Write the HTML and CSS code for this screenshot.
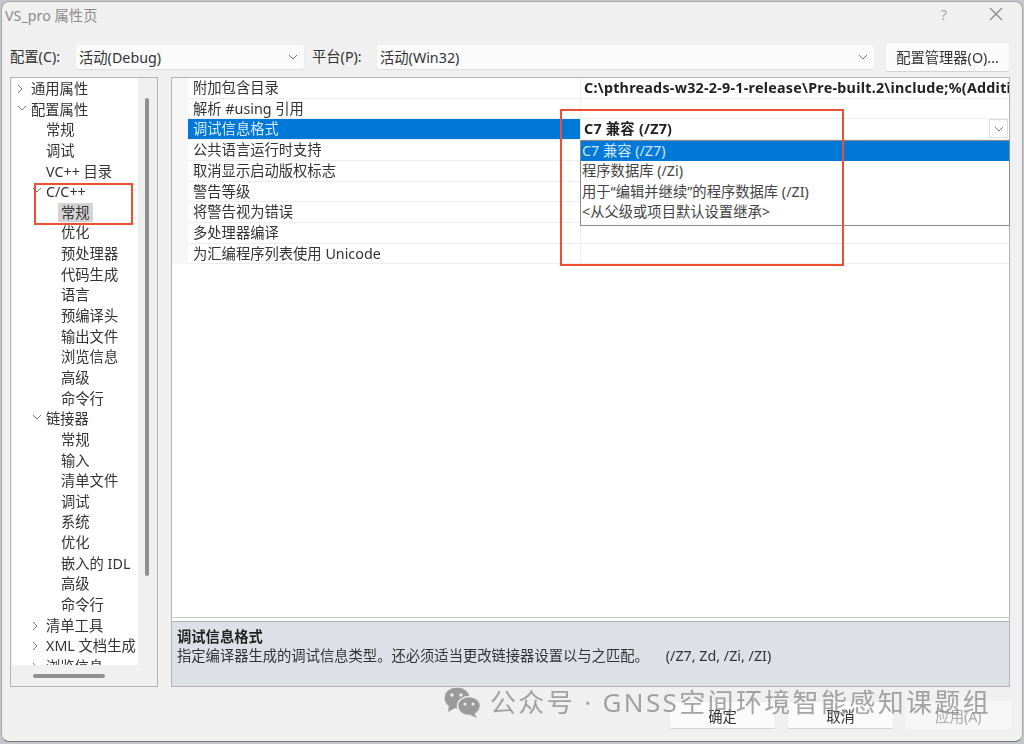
FILE: index.html
```html
<!DOCTYPE html>
<html lang="zh-CN">

<head>
    <meta charset="UTF-8">
    <title>VS_pro 属性页</title>
    <link rel="stylesheet" href="styles.css">
</head>

<body>
    <div class="window">
        <div class="titlebar">
            <span class="title">VS_pro 属性页</span>
            <span class="help">?</span>
            <svg class="close" width="14" height="14" viewBox="0 0 14 14"><path d="M1 1l12 12M13 1L1 13" /></svg>
        </div>

        <div class="config-row">
            <label class="config-label">配置(C):</label>
            <div class="combo combo-config">
                <span>活动(Debug)</span>
                <svg class="chev" width="10" height="6" viewBox="0 0 10 6"><path d="M1 1l4 4 4-4" /></svg>
            </div>
            <label class="platform-label">平台(P):</label>
            <div class="combo combo-platform">
                <span>活动(Win32)</span>
                <svg class="chev" width="10" height="6" viewBox="0 0 10 6"><path d="M1 1l4 4 4-4" /></svg>
            </div>
            <button class="btn btn-manager">配置管理器(O)...</button>
        </div>

        <div class="panels">
            <div class="tree-panel">
                <div class="tree-top">
                    <ul class="tree">
                        <li class="lv0"><svg class="arrow" width="6" height="10" viewBox="0 0 6 10"><path d="M1 1l4 4-4 4" /></svg>通用属性</li>
                        <li class="lv0"><svg class="arrow" width="10" height="6" viewBox="0 0 10 6"><path d="M1 1l4 4 4-4" /></svg>配置属性</li>
                        <li class="lv1">常规</li>
                        <li class="lv1">调试</li>
                        <li class="lv1">VC++ 目录</li>
                        <li class="lv1 has-arrow"><svg class="arrow" width="10" height="6" viewBox="0 0 10 6"><path d="M1 1l4 4 4-4" /></svg>C/C++</li>
                        <li class="lv2"><span class="current">常规</span></li>
                        <li class="lv2">优化</li>
                        <li class="lv2">预处理器</li>
                        <li class="lv2">代码生成</li>
                        <li class="lv2">语言</li>
                        <li class="lv2">预编译头</li>
                        <li class="lv2">输出文件</li>
                        <li class="lv2">浏览信息</li>
                        <li class="lv2">高级</li>
                        <li class="lv2">命令行</li>
                        <li class="lv1 has-arrow"><svg class="arrow" width="10" height="6" viewBox="0 0 10 6"><path d="M1 1l4 4 4-4" /></svg>链接器</li>
                        <li class="lv2">常规</li>
                        <li class="lv2">输入</li>
                        <li class="lv2">清单文件</li>
                        <li class="lv2">调试</li>
                        <li class="lv2">系统</li>
                        <li class="lv2">优化</li>
                        <li class="lv2">嵌入的 IDL</li>
                        <li class="lv2">高级</li>
                        <li class="lv2">命令行</li>
                        <li class="lv1 has-arrow"><svg class="arrow" width="6" height="10" viewBox="0 0 6 10"><path d="M1 1l4 4-4 4" /></svg>清单工具</li>
                        <li class="lv1 has-arrow"><svg class="arrow" width="6" height="10" viewBox="0 0 6 10"><path d="M1 1l4 4-4 4" /></svg>XML 文档生成</li>
                        <li class="lv1 has-arrow"><svg class="arrow" width="6" height="10" viewBox="0 0 6 10"><path d="M1 1l4 4-4 4" /></svg>浏览信息</li>
                    </ul>
                    <div class="vscroll"><div class="vthumb"></div></div>
                </div>
                <div class="hscroll"><div class="hthumb"></div></div>
            </div>

            <div class="grid-panel">
                <div class="grid">
                    <div class="row"><div class="name">附加包含目录</div><div class="value bold">C:\pthreads-w32-2-9-1-release\Pre-built.2\include;%(AdditionalIncludeDirectories)</div></div>
                    <div class="row"><div class="name">解析 #using 引用</div><div class="value"></div></div>
                    <div class="row"><div class="name selected">调试信息格式</div><div class="value bold">C7 兼容 (/Z7)<span class="drop-btn"><svg width="10" height="6" viewBox="0 0 10 6"><path d="M1 1l4 4 4-4" /></svg></span></div></div>
                    <div class="row"><div class="name">公共语言运行时支持</div><div class="value"></div></div>
                    <div class="row"><div class="name">取消显示启动版权标志</div><div class="value"></div></div>
                    <div class="row"><div class="name">警告等级</div><div class="value"></div></div>
                    <div class="row"><div class="name">将警告视为错误</div><div class="value"></div></div>
                    <div class="row"><div class="name">多处理器编译</div><div class="value"></div></div>
                    <div class="row"><div class="name">为汇编程序列表使用 Unicode</div><div class="value"></div></div>
                </div>
                <div class="desc">
                    <div class="desc-title">调试信息格式</div>
                    <div class="desc-text">指定编译器生成的调试信息类型。还必须适当更改链接器设置以与之匹配。<span class="desc-flags">(/Z7, Zd, /Zi, /ZI)</span></div>
                </div>
            </div>
        </div>

        <div class="footer">
            <button class="btn btn-foot">确定</button>
            <button class="btn btn-foot">取消</button>
            <button class="btn btn-foot btn-off">应用(A)</button>
        </div>
    </div>

    <!-- overlays -->
    <ul class="dropdown">
        <li class="active">C7 兼容 (/Z7)</li>
        <li>程序数据库 (/Zi)</li>
        <li>用于“编辑并继续”的程序数据库 (/ZI)</li>
        <li>&lt;从父级或项目默认设置继承&gt;</li>
    </ul>
    <div class="mark mark-tree"></div>
    <div class="mark mark-grid"></div>
    <div class="watermark">
        <svg width="38" height="32" viewBox="0 0 38 32">
            <ellipse cx="14" cy="12" rx="13" ry="11" />
            <path d="M6 19l-1 7 7-4z" />
            <ellipse cx="26" cy="20" rx="11.5" ry="9.5" stroke="#eee" stroke-width="1.5" />
            <path d="M31 27l3 5-7-3z" />
            <circle class="eye" cx="9" cy="9" r="1.7" />
            <circle class="eye" cx="18" cy="9" r="1.7" />
            <circle class="eye" cx="22" cy="18" r="1.5" />
            <circle class="eye" cx="30" cy="18" r="1.5" />
        </svg>
        <span>公众号 · GNSS空间环境智能感知课题组</span>
    </div>
</body>

</html>
```

FILE: styles.css
```css
* {
    box-sizing: border-box;
}

body {
    margin: 0;
    width: 1024px;
    height: 744px;
    overflow: hidden;
    position: relative;
    background: #c4c6cc;
    font-family: "Noto Sans", "Noto Sans CJK SC", sans-serif;
    font-size: 14.3px;
    color: #333;
    filter: blur(0.4px);
}

svg path {
    fill: none;
    stroke: #777;
    stroke-width: 1;
}

.window {
    margin: 1px 1px 0 1px;
    height: 741px;
    background: #f0f0f0;
    border: 1px solid #a8a8a8;
    border-bottom-color: #777;
    border-radius: 8px;
    padding: 0 12px 0 8px;
    display: flex;
    flex-direction: column;
}

.titlebar {
    height: 39px;
    display: flex;
    align-items: center;
    margin-left: -5px;
    padding-bottom: 15px;
    flex: none;
}

.title {
    flex: 1;
    color: #8c8c8c;
}

.help {
    color: #aaa;
    margin-right: 42px;
}

.close {
    margin-right: 7px;
}

.close path {
    stroke: #8a8a8a;
    stroke-width: 1.3;
}

.config-row {
    height: 31px;
    display: flex;
    align-items: center;
    flex: none;
}

.config-label {
    width: 66px;
    padding-bottom: 3px;
}

.platform-label {
    width: 65px;
    margin-left: 8px;
    padding-bottom: 3px;
}

.combo {
    height: 24px;
    background: #fbfbfb;
    border-radius: 3px;
    display: flex;
    align-items: center;
    justify-content: space-between;
    padding: 0 6px 0 3px;
    box-shadow: 0 1px 1px #ddd;
}

.combo span {
    padding-bottom: 1px;
}

.combo-config {
    width: 228px;
}

.combo-platform {
    width: 497px;
}

.btn {
    font-family: inherit;
    font-size: 14.3px;
    color: #333;
    background: #fbfbfb;
    border: 1px solid #ececec;
    border-bottom-color: #d4d4d4;
    border-radius: 3px;
    padding: 0;
}

.btn-manager {
    width: 125px;
    height: 30px;
    margin-left: 11px;
}

.panels {
    height: 610px;
    margin-top: 5px;
    display: flex;
    flex: none;
}

.tree-panel {
    width: 148px;
    border: 1px solid #b4b4b4;
    display: flex;
    flex-direction: column;
    flex: none;
}

.tree-top {
    display: flex;
    height: 587px;
}

.tree {
    list-style: none;
    margin: 0;
    padding: 0;
    width: 126px;
    height: 587px;
    background: #fff;
    overflow: hidden;
    margin-left: 1px;
}

.tree li {
    height: 20.65px;
    line-height: 21px;
    white-space: nowrap;
    position: relative;
    overflow: hidden;
}

.tree .lv0 {
    padding-left: 19px;
}

.tree .lv1 {
    padding-left: 34px;
}

.tree .lv2 {
    padding-left: 49px;
}

.arrow {
    position: absolute;
    left: 5px;
    top: 6px;
}

.has-arrow .arrow {
    left: 20px;
}

.current {
    display: inline-block;
    background: #d4d4d4;
    padding: 0 3px;
    margin-left: -3px;
    height: 20px;
    line-height: 20px;
}

.vscroll {
    flex: 1;
    padding: 20px 0 0 7px;
}

.vthumb {
    width: 4px;
    height: 478px;
    background: #8f8f8f;
    border-radius: 2px;
}

.hscroll {
    padding: 9px 0 0 22px;
}

.hthumb {
    width: 72px;
    height: 4px;
    background: #8f8f8f;
    border-radius: 2px;
}

.grid-panel {
    width: 839px;
    margin-left: 13px;
    border: 1px solid #b4b4b4;
    background: #fff;
    display: flex;
    flex-direction: column;
    flex: none;
}

.grid {
    flex: 1;
}

.row {
    display: flex;
    height: 20.72px;
    line-height: 20px;
    padding-left: 16px;
    background: #f6f6f6;
}

.name {
    width: 392px;
    padding-left: 5px;
    background: #fff;
    border-bottom: 1px solid #eee;
    white-space: nowrap;
}

.name.selected {
    background: #0078d7;
    color: #dcecf9;
}

.value {
    flex: 1;
    min-width: 0;
    padding-left: 3px;
    background: #fff;
    border-left: 1px solid #eee;
    border-bottom: 1px solid #eee;
    white-space: nowrap;
    overflow: hidden;
    position: relative;
}

.bold {
    font-weight: 700;
    color: #222;
    letter-spacing: 0.25px;
}

.drop-btn {
    position: absolute;
    right: 1px;
    top: 0;
    width: 19px;
    height: 19px;
    background: #fff;
    border: 1px solid #ddd;
    display: flex;
    align-items: center;
    justify-content: center;
}

.desc {
    height: 65px;
    flex: none;
    background: #dde0e7;
    border-top: 1px solid #b4b4b4;
    box-shadow: 0 -3px 0 #fff, 0 -4px 0 #ccc;
    padding: 5px 5px;
    line-height: 19px;
}

.desc-title {
    font-weight: 700;
    color: #222;
}

.desc-flags {
    margin-left: 17px;
}

.footer {
    flex: 1;
    display: flex;
    justify-content: flex-end;
    align-items: flex-start;
    gap: 11px;
    padding-top: 14px;
    margin-right: -2px;
}

.btn-foot {
    width: 107px;
    height: 28px;
}

.btn-off {
    color: #aaa;
    background: #f6f6f6;
    border-color: #f4f4f4;
}

.dropdown {
    position: absolute;
    left: 580px;
    top: 140px;
    width: 430px;
    height: 86px;
    margin: 0;
    padding: 0;
    list-style: none;
    background: #fff;
    border: 1px solid #8a8a8a;
    color: #444;
}

.dropdown li {
    height: 20.3px;
    line-height: 20px;
    padding-left: 1px;
    white-space: nowrap;
}

.dropdown .active {
    background: #0078d7;
    color: #cfe6f8;
}

.mark {
    position: absolute;
    border: 2px solid #ee4e32;
}

.mark-tree {
    left: 34px;
    top: 183px;
    width: 99px;
    height: 42px;
}

.mark-grid {
    left: 560px;
    top: 109px;
    width: 284px;
    height: 157px;
}

.watermark {
    position: absolute;
    left: 443px;
    top: 685px;
    display: flex;
    align-items: center;
    gap: 9px;
    color: rgba(130, 130, 130, 0.72);
    font-size: 26px;
    line-height: 34px;
    letter-spacing: 2.35px;
    white-space: nowrap;
}

.watermark svg ellipse,
.watermark svg path {
    fill: #9a9a9a;
    stroke: none;
}

.watermark svg ellipse {
    stroke: #eee;
}

.watermark .eye {
    fill: #eee;
}
```
